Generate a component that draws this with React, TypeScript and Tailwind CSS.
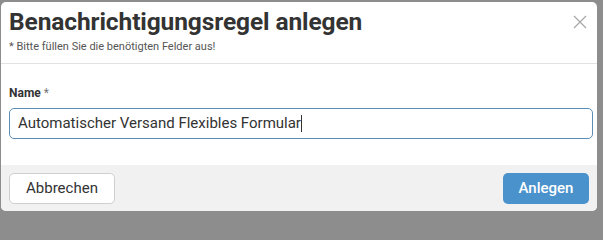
import React from "react";

export default function App() {
  return (
    <div
      className="w-screen h-screen bg-[#8d8d8d] pt-[2px] pl-[1px] overflow-hidden"
      style={{ fontFamily: "Roboto, 'Liberation Sans', sans-serif" }}
    >
      <div className="w-[596px] h-[209px] bg-white rounded-[5px] overflow-hidden flex flex-col">
        <div className="relative h-[62px] border-b border-[#e2e2e2] px-[8px] pt-[5px]">
          <h1 className="text-[24.5px] leading-[30px] font-bold text-[#333333] tracking-[-0.1px]">
            Benachrichtigungsregel anlegen
          </h1>
          <p className="text-[11px] leading-[14px] text-[#555555] mt-[3px]">
            * Bitte füllen Sie die benötigten Felder aus!
          </p>
          <button className="absolute right-[9px] top-[12px] w-[16px] h-[16px] text-[#a8a8a8]">
            <svg viewBox="0 0 16 16" width="16" height="16" fill="none" stroke="currentColor" strokeWidth="1.3">
              <path d="M2 2 L14 14 M14 2 L2 14" />
            </svg>
          </button>
        </div>
        <div className="h-[101px] px-[8px] pt-[21px]">
          <label className="block text-[12px] leading-[16px] font-bold text-[#333333]">
            Name <span className="font-normal text-[#777777]">*</span>
          </label>
          <div className="mt-[7px] h-[31px] w-[584px] border border-[#5b8db5] rounded-[5px] flex items-center px-[8px] text-[15px] text-[#333333]">
            Automatischer Versand Flexibles Formular
            <span className="inline-block w-[1px] h-[17px] bg-[#333333]"></span>
          </div>
        </div>
        <div className="flex-1 bg-[#f1f1f1] px-[8px] pt-[8px] flex justify-between items-start">
          <button className="w-[106px] h-[31px] bg-white border border-[#cfcfcf] rounded-[5px] text-[15px] text-[#333333]">
            Abbrechen
          </button>
          <button className="w-[86px] h-[31px] bg-[#4a92cc] rounded-[5px] text-[15px] font-medium text-white">
            Anlegen
          </button>
        </div>
      </div>
    </div>
  );
}
